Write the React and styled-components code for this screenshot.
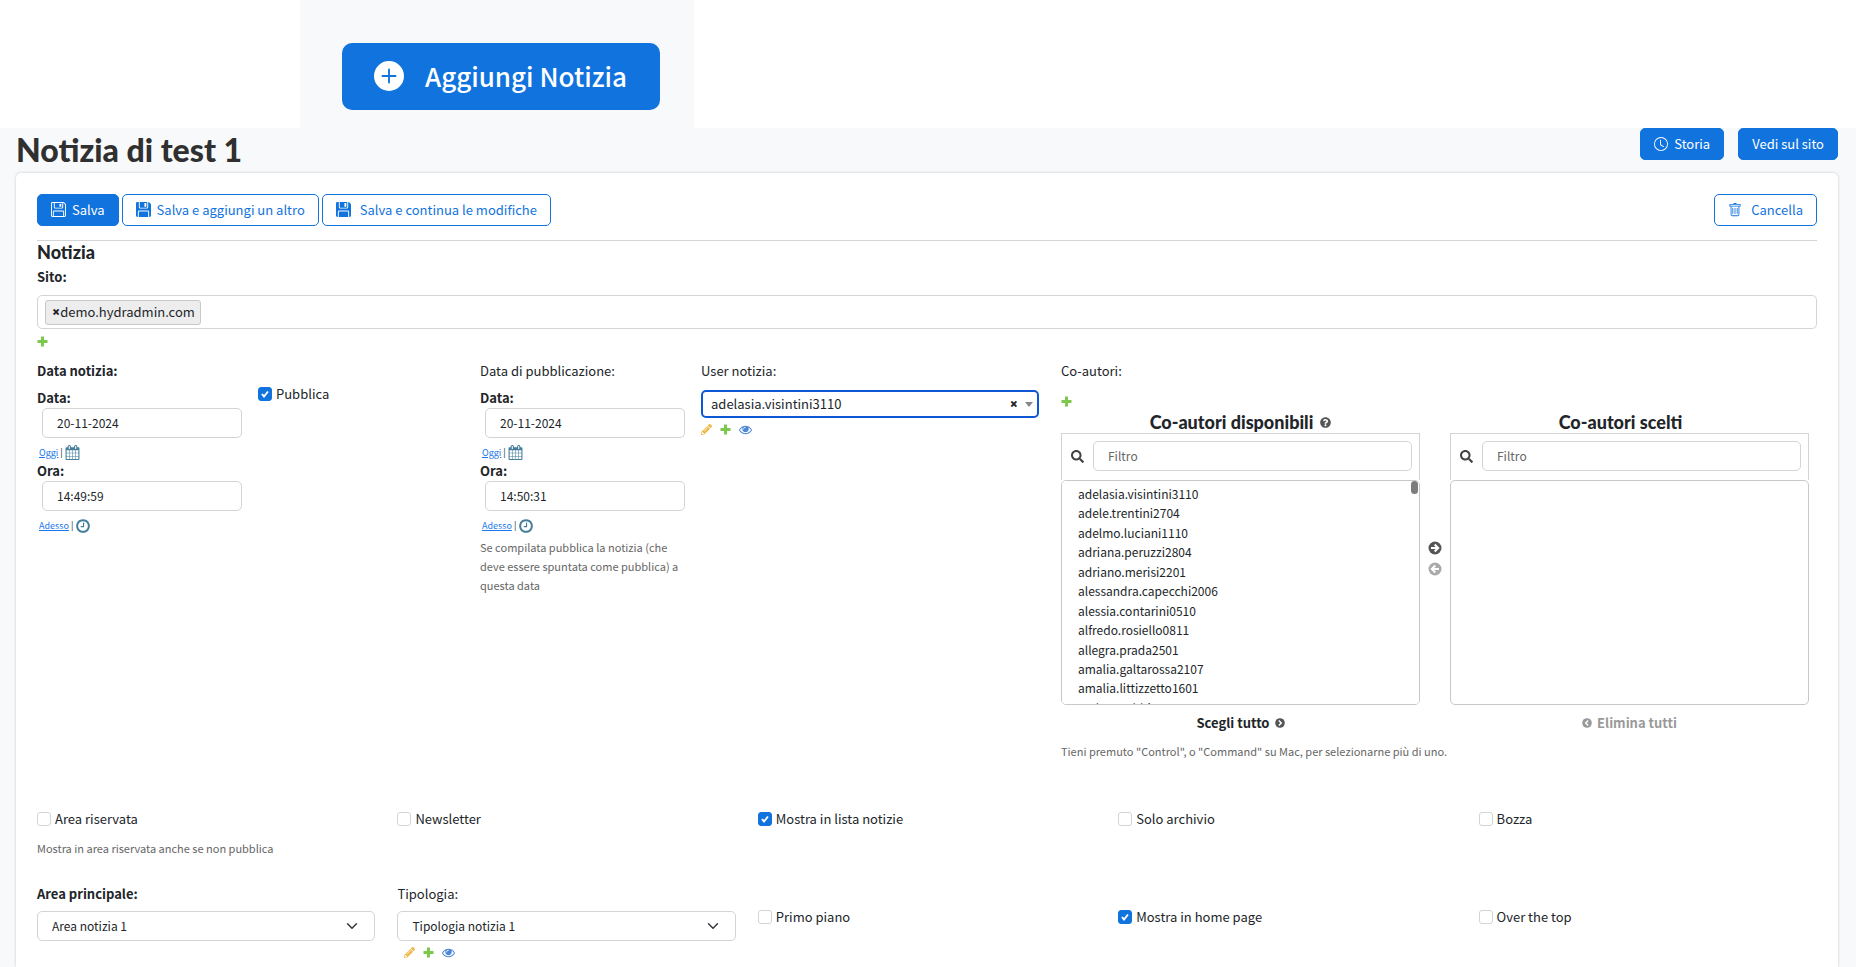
import styled, { createGlobalStyle } from "styled-components";
import { BsPlusCircleFill, BsClock, BsFloppy, BsFloppyFill, BsTrash } from "react-icons/bs";
import { FaPencilAlt, FaSearch } from "react-icons/fa";

const authors = [
  "adelasia.visintini3110",
  "adele.trentini2704",
  "adelmo.luciani1110",
  "adriana.peruzzi2804",
  "adriano.merisi2201",
  "alessandra.capecchi2006",
  "alessia.contarini0510",
  "alfredo.rosiello0811",
  "allegra.prada2501",
  "amalia.galtarossa2107",
  "amalia.littizzetto1601",
  "amleto.rubbia1306",
];

const PlusIcon = () => (
  <svg width="11" height="11" viewBox="0 0 11 11" fill="#7cc84a" aria-hidden="true">
    <path d="M4 0.500h3v3.500h3.500v3H7v3.500H4V7H0.500V4H4z" />
  </svg>
);

const CalendarIcon = () => (
  <svg width="15" height="15" viewBox="0 0 1792 1792" fill="#447e9b" aria-hidden="true">
    <path d="M192 1664h288v-288h-288v288zm352 0h320v-288h-320v288zm-352-352h288v-320h-288v320zm352 0h320v-320h-320v320zm-352-384h288v-288h-288v288zm736 736h320v-288h-320v288zm-384-736h320v-288h-320v288zm768 736h288v-288h-288v288zm-384-352h320v-320h-320v320zm-352-864v-288q0-13-9.500-22.500t-22.500-9.500h-64q-13 0-22.500 9.500t-9.500 22.500v288q0 13 9.500 22.500t22.500 9.500h64q13 0 22.500-9.500t9.500-22.500zm736 864h288v-320h-288v320zm-384-384h320v-288h-320v288zm384 0h288v-288h-288v288zm32-480v-288q0-13-9.500-22.500t-22.500-9.500h-64q-13 0-22.500 9.500t-9.500 22.500v288q0 13 9.500 22.500t22.500 9.500h64q13 0 22.500-9.500t9.500-22.500zm384-64v1280q0 52-38 90t-90 38h-1408q-52 0-90-38t-38-90v-1280q0-52 38-90t90-38h128v-96q0-66 47-113t113-47h64q66 0 113 47t47 113v96h384v-96q0-66 47-113t113-47h64q66 0 113 47t47 113v96h128q52 0 90 38t38 90z" />
  </svg>
);

const ClockIcon = () => (
  <svg width="16" height="16" viewBox="0 0 1792 1792" fill="#447e9b" aria-hidden="true">
    <path d="M1024 544v448q0 14-9 23t-23 9h-320q-14 0-23-9t-9-23v-64q0-14 9-23t23-9h224v-352q0-14 9-23t23-9h64q14 0 23 9t9 23zm416 352q0-148-73-273t-198-198-273-73-273 73-198 198-73 273 73 273 198 198 273 73 273-73 198-198 73-273zm224 0q0 209-103 385.500t-279.500 279.500-385.500 103-385.500-103-279.500-279.500-103-385.500 103-385.500 279.500-279.500 385.500-103 385.500 103 279.500 279.500 103 385.500z" />
  </svg>
);

const EyeIcon = () => (
  <svg width="13" height="13" viewBox="0 0 1792 1792" fill="#4d86d6" aria-hidden="true">
    <path d="M1664 960q-152-236-381-353 61 104 61 225 0 185-131.500 316.500t-316.500 131.500-316.500-131.500-131.500-316.500q0-121 61-225-229 117-381 353 133 205 333.500 326.500t434.500 121.500 434.500-121.500 333.500-326.500zm-720-384q0-20-14-34t-34-14q-125 0-214.500 89.500t-89.500 214.500q0 20 14 34t34 14 34-14 14-34q0-86 61-147t147-61q20 0 34-14t14-34zm848 384q0 34-20 69-140 230-376.500 368.500t-499.500 138.500-499.500-139-376.500-368q-20-35-20-69t20-69q140-229 376.500-368t499.500-139 499.500 139 376.500 368q20 35 20 69z" />
  </svg>
);

const ArrowIcon = ({ left }) => (
  <svg width="14" height="14" viewBox="0 0 14 14" aria-hidden="true">
    <circle cx="7" cy="7" r="6.500" fill={left ? "#aaa" : "#555"} />
    <path
      d={left ? "M11 7H4M7.300 3.500 3.800 7l3.500 3.500" : "M3 7h7M6.700 3.500 10.200 7l-3.500 3.500"}
      fill="none"
      stroke="#fff"
      strokeWidth="2"
    />
  </svg>
);

const ChevronIcon = ({ left }) => (
  <svg width="10" height="10" viewBox="0 0 10 10" aria-hidden="true">
    <circle cx="5" cy="5" r="4.800" fill={left ? "#999" : "#555"} />
    <path
      d={left ? "M6.200 2.500 3.700 5l2.500 2.500" : "M3.800 2.500 6.300 5 3.800 7.500"}
      fill="none"
      stroke="#fff"
      strokeWidth="1.500"
    />
  </svg>
);

const HelpIcon = () => (
  <svg width="11" height="11" viewBox="0 0 512 512" fill="#555" aria-hidden="true">
    <path d="M504 256c0 137-111 248-248 248S8 393 8 256 119 8 256 8s248 111 248 248zM262.700 90c-54.500 0-89.300 23-116.500 63.800-3.500 5.300-2.400 12.400 2.700 16.300l34.700 26.300c5.200 3.900 12.600 3 16.700-2.100 17.900-22.700 30.100-35.800 57.300-35.800 20.400 0 45.700 13.100 45.700 33 0 15-12.400 22.700-32.500 34C247.100 238.500 216 254.900 216 296v4c0 6.600 5.400 12 12 12h56c6.600 0 12-5.400 12-12v-1.300c0-28.500 83.200-29.600 83.200-106.700 0-58-60.200-102-116.500-102zM256 338c-25.400 0-46 20.600-46 46s20.600 46 46 46 46-20.600 46-46-20.600-46-46-46z" />
  </svg>
);

const DateTime = ({ id, date, time }) => (
  <>
    <SmallLabel htmlFor={`${id}-date`}>Data:</SmallLabel>
    <DateInput id={`${id}-date`} defaultValue={date} />
    <Shortcut>
      <a href="#oggi">Oggi</a> | <CalendarIcon />
    </Shortcut>
    <SmallLabel htmlFor={`${id}-time`}>Ora:</SmallLabel>
    <DateInput id={`${id}-time`} defaultValue={time} />
    <Shortcut>
      <a href="#adesso">Adesso</a> | <ClockIcon />
    </Shortcut>
  </>
);

const Check = ({ children, checked }) => (
  <CheckLabel>
    <Checkbox type="checkbox" defaultChecked={checked} />
    {children}
  </CheckLabel>
);

const RelatedLinks = ({ indent }) => (
  <Related $indent={indent}>
    <a href="#modifica" aria-label="Modifica">
      <FaPencilAlt size={11} color="#efb948" />
    </a>
    <a href="#aggiungi" aria-label="Aggiungi">
      <PlusIcon />
    </a>
    <a href="#vedi" aria-label="Vedi">
      <EyeIcon />
    </a>
  </Related>
);

const App = () => {
  return (
    <Page>
      <GlobalStyle />
      <Banner>
        <BannerPanel>
          <AddButton>
            <BsPlusCircleFill size={30} />
            Aggiungi Notizia
          </AddButton>
        </BannerPanel>
      </Banner>

      <Header>
        <Title>Notizia di test 1</Title>
        <HeaderActions>
          <Button $primary>
            <BsClock size={14} />
            Storia
          </Button>
          <Button $primary>Vedi sul sito</Button>
        </HeaderActions>
      </Header>

      <Card>
        <Toolbar>
          <Button $primary>
            <BsFloppy size={15} />
            Salva
          </Button>
          <Button>
            <BsFloppyFill size={15} />
            Salva e aggiungi un altro
          </Button>
          <Button $wide>
            <BsFloppyFill size={15} />
            Salva e continua le modifiche
          </Button>
          <Spacer />
          <Button $wide>
            <BsTrash size={14} />
            Cancella
          </Button>
        </Toolbar>

        <SectionTitle>Notizia</SectionTitle>
        <Label as="div" $bold>
          Sito:
        </Label>
        <TagBox>
          <Tag>
            <ClearButton aria-label="Rimuovi">×</ClearButton>
            demo.hydradmin.com
          </Tag>
        </TagBox>
        <AddLink href="#sito" aria-label="Aggiungi sito">
          <PlusIcon />
        </AddLink>

        <MainRow>
          <div>
            <Label as="div" $bold>
              Data notizia:
            </Label>
            <DateTime id="news" date="20-11-2024" time="14:49:59" />
          </div>
          <PublishCell>
            <Check checked>Pubblica</Check>
          </PublishCell>
          <div>
            <Label as="div">Data di pubblicazione:</Label>
            <DateTime id="pub" date="20-11-2024" time="14:50:31" />
            <Help>Se compilata pubblica la notizia (che deve essere spuntata come pubblica) a questa data</Help>
          </div>
          <div>
            <Label as="div">User notizia:</Label>
            <UserBox>
              <UserName>adelasia.visintini3110</UserName>
              <ClearButton aria-label="Svuota">×</ClearButton>
              <Caret />
            </UserBox>
            <RelatedLinks />
          </div>
          <div>
            <Label as="div">Co-autori:</Label>
            <CoAuthorAdd href="#coautori" aria-label="Aggiungi co-autore">
              <PlusIcon />
            </CoAuthorAdd>
            <Selector>
              <SelectorSide>
                <SelectorTitle>
                  Co-autori disponibili <HelpIcon />
                </SelectorTitle>
                <FilterBar>
                  <FaSearch size={13} color="#444" />
                  <FilterInput placeholder="Filtro" aria-label="Filtro disponibili" />
                </FilterBar>
                <ListWrap>
                  <List multiple aria-label="Co-autori disponibili">
                    {authors.map((name) => (
                      <option key={name}>{name}</option>
                    ))}
                  </List>
                  <ScrollThumb />
                </ListWrap>
                <ChooseAll>
                  Scegli tutto <ChevronIcon />
                </ChooseAll>
              </SelectorSide>
              <Chooser>
                <button aria-label="Scegli">
                  <ArrowIcon />
                </button>
                <button aria-label="Elimina">
                  <ArrowIcon left />
                </button>
              </Chooser>
              <SelectorSide>
                <SelectorTitle $noHelp>Co-autori scelti</SelectorTitle>
                <FilterBar>
                  <FaSearch size={13} color="#444" />
                  <FilterInput placeholder="Filtro" aria-label="Filtro scelti" />
                </FilterBar>
                <List multiple aria-label="Co-autori scelti" />
                <ChooseAll $muted>
                  <ChevronIcon left /> Elimina tutti
                </ChooseAll>
              </SelectorSide>
            </Selector>
            <Help>Tieni premuto "Control", o "Command" su Mac, per selezionarne più di uno.</Help>
          </div>
        </MainRow>

        <FlagRow>
          <div>
            <Check>Area riservata</Check>
            <FlagHelp>Mostra in area riservata anche se non pubblica</FlagHelp>
          </div>
          <Check>Newsletter</Check>
          <Check checked>Mostra in lista notizie</Check>
          <Check>Solo archivio</Check>
          <Check>Bozza</Check>
        </FlagRow>

        <AreaRow>
          <div>
            <Label htmlFor="area" $bold>
              Area principale:
            </Label>
            <Select id="area">
              <option>Area notizia 1</option>
            </Select>
          </div>
          <div>
            <Label htmlFor="type">Tipologia:</Label>
            <Select id="type">
              <option>Tipologia notizia 1</option>
            </Select>
            <RelatedLinks indent />
          </div>
          <AreaCheck>
            <Check>Primo piano</Check>
          </AreaCheck>
          <AreaCheck>
            <Check checked>Mostra in home page</Check>
          </AreaCheck>
          <AreaCheck>
            <Check>Over the top</Check>
          </AreaCheck>
        </AreaRow>
      </Card>
    </Page>
  );
};

export default App;

const GlobalStyle = createGlobalStyle`
  * {
    box-sizing: border-box;
  }

  body {
    margin: 0;
    background: #f8f9fb;
    color: #212529;
    font-family: "Noto Sans CJK SC", sans-serif;
    font-size: 13px;
    line-height: 20px;
  }

  button, input, select {
    font: inherit;
    color: inherit;
  }

  button {
    cursor: pointer;
  }

  svg {
    flex-shrink: 0;
  }
`;

const Page = styled.div`
  display: flex;
  flex-direction: column;
  min-height: 100vh;
`;

const Banner = styled.div`
  display: flex;
  height: 128px;
  padding-left: 300px;
  background: #fff;
`;

const BannerPanel = styled.div`
  width: 394px;
  padding: 43px 34px 0 42px;
  background: #f8f9fb;
`;

const AddButton = styled.button`
  display: flex;
  align-items: center;
  gap: 21px;
  width: 100%;
  height: 67px;
  padding: 0 32px 2px;
  border: 0;
  border-radius: 10px;
  background: #1173de;
  color: #fff;
  font-size: 26px;
  font-weight: 500;
  white-space: nowrap;
`;

const Header = styled.header`
  display: flex;
  justify-content: space-between;
  align-items: flex-start;
  height: 45px;
  padding: 0 18px 0 16px;
`;

const Title = styled.h1`
  margin: 0;
  font-family: Lato, sans-serif;
  font-size: 32px;
  font-weight: 900;
  line-height: 43px;
  color: #303030;
`;

const HeaderActions = styled.div`
  display: flex;
  gap: 14px;
`;

const Button = styled.button`
  display: inline-flex;
  align-items: center;
  gap: ${(props) => (props.$wide ? "9px" : "6px")};
  height: 32px;
  padding: 0 13px 1px;
  border: 1px solid #1173de;
  border-radius: 5px;
  background: ${(props) => (props.$primary ? "#1173de" : "#fff")};
  color: ${(props) => (props.$primary ? "#fff" : "#1173de")};
  white-space: nowrap;
`;

const Card = styled.main`
  flex: 1;
  margin: 0 18px 0 16px;
  padding: 21px 21px 0;
  border-radius: 5px 5px 0 0;
  background: #fff;
  box-shadow: 0 0 3px rgba(0, 0, 0, 0.2);
`;

const Toolbar = styled.div`
  display: flex;
  gap: 3px;
  padding-bottom: 14px;
  border-bottom: 1px solid #d3d4d5;
`;

const Spacer = styled.div`
  flex: 1;
`;

const SectionTitle = styled.h2`
  margin: 0;
  padding-bottom: 2px;
  font-family: Lato, sans-serif;
  font-size: 18px;
  font-weight: 900;
  line-height: 22px;
`;

const Label = styled.label`
  display: block;
  line-height: 24px;
  font-weight: ${(props) => (props.$bold ? 700 : 400)};
`;

const TagBox = styled.div`
  display: flex;
  align-items: center;
  height: 34px;
  margin-top: 6px;
  padding: 0 7px;
  border: 1px solid #d3d4d5;
  border-radius: 5px;
`;

const Tag = styled.span`
  display: flex;
  align-items: center;
  height: 25px;
  padding: 0 5px 0 6px;
  border: 1px solid #c8c8c8;
  border-radius: 3px;
  background: #ededed;
`;

const AddLink = styled.a`
  display: flex;
  align-items: center;
  height: 24px;
`;

const MainRow = styled.div`
  display: grid;
  grid-template-columns: 221fr 222fr 221fr 360fr 778fr;
  min-height: 450px;
  margin: 6px -22px 0 0;

  > div {
    padding-right: 22px;
  }
`;

const SmallLabel = styled.label`
  display: block;
  line-height: 20px;
  font-weight: 700;

  ${Label} + & {
    margin-top: 5px;
  }
`;

const DateInput = styled.input`
  display: block;
  width: calc(100% + 1px);
  max-width: 200px;
  height: 30px;
  margin-left: 5px;
  padding: 0 14px 2px;
  border: 1px solid #d3d4d5;
  border-radius: 5px;
  background: #fff;
  font-size: 12px;
`;

const Shortcut = styled.div`
  display: flex;
  align-items: center;
  gap: 2px;
  height: 23px;
  padding: 6px 0 0 2px;
  font-size: 9px;

  a {
    color: #1a78ea;
  }
`;

const PublishCell = styled.div`
  padding-top: 25px;
`;

const CheckLabel = styled.label`
  display: flex;
  align-items: center;
  gap: 4px;
  height: 20px;
`;

const Checkbox = styled.input`
  appearance: none;
  width: 14px;
  height: 14px;
  margin: 0;
  border: 1px solid #d3d4d5;
  border-radius: 3px;
  background: #fff;

  &:checked {
    border-color: #1173de;
    background: #1173de
      url("data:image/svg+xml,%3Csvg xmlns='http://www.w3.org/2000/svg' viewBox='0 0 14 14'%3E%3Cpath d='M4 7l2 2.500 4-5' fill='none' stroke='white' stroke-width='2'/%3E%3C/svg%3E")
      center / 14px no-repeat;
  }
`;

const Help = styled.div`
  padding-top: 4px;
  color: #666;
  font-size: 11px;
  line-height: 19px;
`;

const UserBox = styled.div`
  display: flex;
  align-items: center;
  height: 28px;
  margin-top: 7px;
  padding: 0 4px 0 8px;
  border: 2px solid #1057d8;
  border-radius: 5px;
`;

const UserName = styled.span`
  flex: 1;
`;

const ClearButton = styled.button`
  padding: 0;
  border: 0;
  background: none;
  font-family: "Open Sans", sans-serif;
  font-size: 14px;
  font-weight: 800;
`;

const Caret = styled.span`
  margin-left: 7px;
  border: solid transparent;
  border-width: 5px 4px 0;
  border-top-color: #888;
`;

const Related = styled.div`
  display: flex;
  align-items: center;
  gap: 8px;
  height: 23px;
  padding-left: ${(props) => (props.$indent ? "7px" : "0")};

  a {
    display: flex;
  }
`;

const CoAuthorAdd = styled(AddLink)`
  margin-top: 6px;
`;

const Selector = styled.div`
  display: flex;
  padding-right: 8px;
`;

const SelectorSide = styled.div`
  flex: 1;
  min-width: 0;
`;

const SelectorTitle = styled.h3`
  display: flex;
  justify-content: center;
  align-items: center;
  gap: 7px;
  height: 20px;
  margin: 0;
  padding: 0 ${(props) => (props.$noHelp ? "18px" : "0")} 2px 0;
  font-family: Lato, sans-serif;
  font-size: 18px;
  font-weight: 900;
`;

const FilterBar = styled.div`
  display: flex;
  align-items: center;
  gap: 9px;
  height: 47px;
  padding: 0 7px 2px 9px;
  border: 1px solid #d3d4d5;
  border-bottom: 0;
`;

const FilterInput = styled.input`
  flex: 1;
  min-width: 0;
  height: 30px;
  padding: 0 14px 1px;
  border: 1px solid #d3d4d5;
  border-radius: 5px;
  font-size: 12px;

  &::placeholder {
    color: #666;
  }
`;

const ListWrap = styled.div`
  position: relative;
`;

const ScrollThumb = styled.span`
  position: absolute;
  top: 1px;
  right: 2px;
  width: 7px;
  height: 13px;
  border-radius: 4px;
  background: #7d7d7d;
`;

const List = styled.select`
  display: block;
  width: 100%;
  height: 225px;
  padding: 3px 14px;
  border: 1px solid #c8c8c8;
  border-radius: 5px;
  background: #fff;
  font-size: 12px;

  option {
    min-height: 1.62em;
    padding: 1px 2px 0;
  }
`;

const ChooseAll = styled.button`
  display: flex;
  justify-content: center;
  align-items: center;
  gap: 5px;
  width: 100%;
  height: 20px;
  margin: 8px 0 5px;
  padding: 0;
  border: 0;
  background: none;
  color: ${(props) => (props.$muted ? "#999" : "#212529")};
  font-weight: 700;
`;

const Chooser = styled.div`
  display: flex;
  flex-direction: column;
  gap: 7px;
  width: 30px;
  padding-top: 128px;
  align-items: center;

  button {
    display: flex;
    padding: 0;
    border: 0;
    background: none;
  }
`;

const FlagRow = styled.div`
  display: grid;
  grid-template-columns: repeat(5, 1fr);
  align-items: start;
  margin-right: -22px;
  min-height: 73px;
`;

const FlagHelp = styled(Help)`
  padding-top: 10px;
`;

const AreaRow = styled.div`
  display: grid;
  grid-template-columns: repeat(5, 1fr);
  align-items: start;
  margin-right: -22px;

  > div {
    padding-right: 22px;
  }
`;

const AreaCheck = styled.div`
  padding-top: 25px;
`;

const Select = styled.select`
  appearance: none;
  display: block;
  width: 100%;
  height: 30px;
  margin-top: 5px;
  padding: 0 14px;
  border: 1px solid #d3d4d5;
  border-radius: 5px;
  background: #fff
    url("data:image/svg+xml,%3Csvg xmlns='http://www.w3.org/2000/svg' viewBox='0 0 16 16'%3E%3Cpath d='M2 5l6 6 6-6' fill='none' stroke='%23343a40' stroke-width='2' stroke-linecap='round' stroke-linejoin='round'/%3E%3C/svg%3E")
    right 16px center / 12px no-repeat;
  font-size: 12px;
`;
